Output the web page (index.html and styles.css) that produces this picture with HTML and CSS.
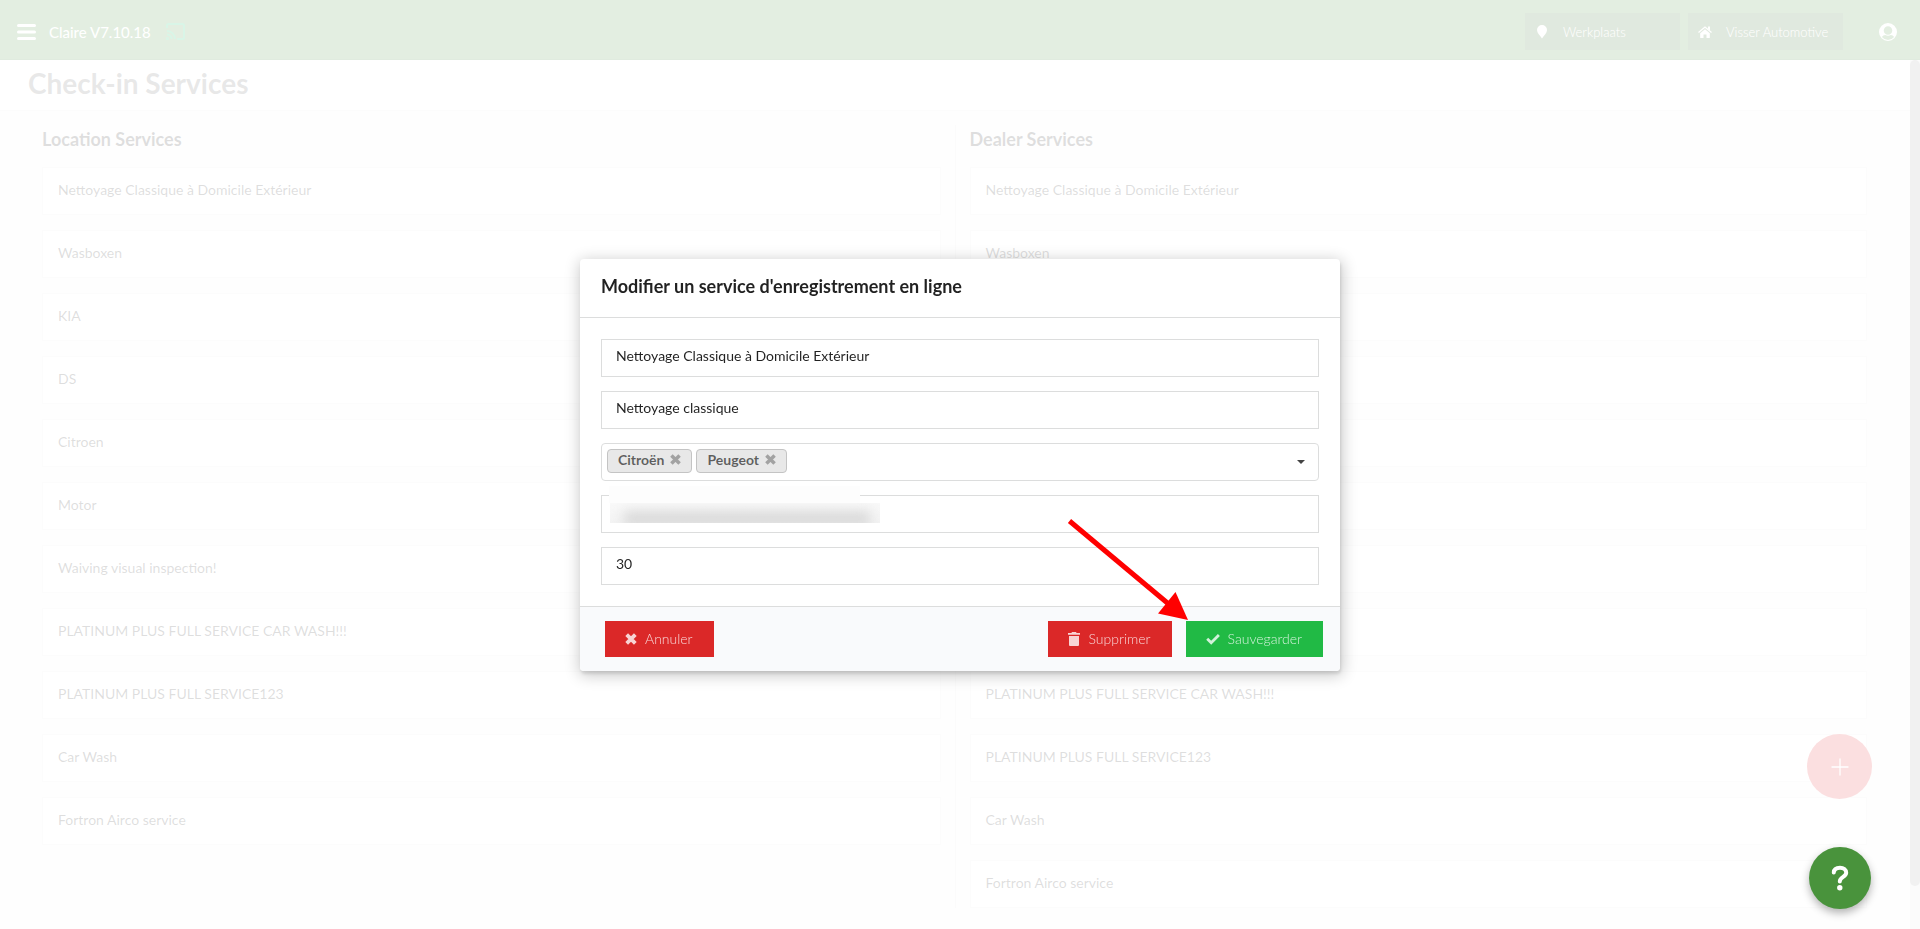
FILE: index.html
```html
<!DOCTYPE html>
<html lang="fr">
<head>
    <meta charset="UTF-8">
    <meta name="viewport" content="width=device-width, initial-scale=1.0">
    <title>Check-in Services</title>
    <link rel="stylesheet" href="styles.css">
</head>
<body>
    <header class="topbar">
        <button class="icon-button" aria-label="Menu">
            <svg width="20" height="18" viewBox="0 0 20 18"><path d="M2.500 2.500h16M2.500 9h16M2.500 15.500h16" stroke="currentColor" stroke-width="3" stroke-linecap="round"/></svg>
        </button>
        <span class="brand">Claire V7.10.18</span>
        <svg class="cast" width="19" height="17" viewBox="0 0 19 17" fill="none" stroke="currentColor" stroke-width="2"><path d="M1 5V2.500Q1 1 2.500 1h14Q18 1 18 2.500v12q0 1.500-1.500 1.500H11M1 8a8 8 0 0 1 8 8M1 11.500A4.500 4.500 0 0 1 5.500 16"/><circle cx="1.500" cy="15.500" r=".6"/></svg>
        <div class="topbar-right">
            <button class="picker">
                <span class="picker-icon"><svg width="10" height="14" viewBox="0 0 10 14" fill="currentColor"><path d="M5 0a5 5 0 0 1 5 5c0 3-3 5.500-5 8.500C3 10.500 0 8 0 5a5 5 0 0 1 5-5z"/></svg></span>
                Werkplaats
            </button>
            <button class="picker">
                <span class="picker-icon"><svg width="14" height="12" viewBox="0 0 14 12" fill="currentColor"><path d="M7 3.300l4.800 4v4.200q0 .5-.5.5H8.500V8.500h-3V12H2.700q-.5 0-.5-.5V7.300z"/><path d="M.5 6.500L7 1.100l6.500 5.400" fill="none" stroke="currentColor" stroke-width="1.300"/><path d="M10 .5h2v4l-2-1.700z"/></svg></span>
                Visser Automotive
            </button>
            <button class="icon-button account" aria-label="Compte">
                <svg width="18" height="18" viewBox="0 0 18 18"><path fill="currentColor" fill-rule="evenodd" d="M9 0a9 9 0 1 1 0 18A9 9 0 0 1 9 0zm0 3.200a4.300 4.300 0 0 0 0 8.600 4.300 4.300 0 0 0 0-8.600zM2.900 14a7.800 7.800 0 0 0 12.200 0c-.8-1.300-1.900-2-3.300-2a5.800 5.800 0 0 1-5.600 0c-1.400 0-2.500.7-3.300 2z"/></svg>
            </button>
        </div>
    </header>

    <div class="page">
        <main class="main">
            <h1 class="page-title">Check-in Services</h1>
            <div class="columns">
                <section class="column">
                    <h2>Location Services</h2>
                    <ul class="services">
                        <li>Nettoyage Classique à Domicile Extérieur</li>
                        <li>Wasboxen</li>
                        <li>KIA</li>
                        <li>DS</li>
                        <li>Citroen</li>
                        <li>Motor</li>
                        <li>Waiving visual inspection!</li>
                        <li>PLATINUM PLUS FULL SERVICE CAR WASH!!!</li>
                        <li>PLATINUM PLUS FULL SERVICE123</li>
                        <li>Car Wash</li>
                        <li>Fortron Airco service</li>
                    </ul>
                </section>
                <section class="column">
                    <h2>Dealer Services</h2>
                    <ul class="services">
                        <li>Nettoyage Classique à Domicile Extérieur</li>
                        <li>Wasboxen</li>
                        <li>KIA</li>
                        <li>DS</li>
                        <li>Citroen</li>
                        <li>Peugeot</li>
                        <li>Motor</li>
                        <li>Waiving visual inspection!</li>
                        <li>PLATINUM PLUS FULL SERVICE CAR WASH!!!</li>
                        <li>PLATINUM PLUS FULL SERVICE123</li>
                        <li>Car Wash</li>
                        <li>Fortron Airco service</li>
                    </ul>
                </section>
            </div>
        </main>
        <div class="scrollbar"><div class="scrollbar-thumb"></div></div>
    </div>

    <button class="add-button" aria-label="Ajouter">
        <svg width="18" height="18" viewBox="0 0 18 18"><path d="M9 1v16M1 9h16" stroke="currentColor" stroke-width="1.300" stroke-linecap="round"/></svg>
    </button>

    <div class="dimmer">
        <form class="modal" role="dialog" aria-labelledby="modal-title">
            <h2 class="modal-header" id="modal-title">Modifier un service d'enregistrement en ligne</h2>
            <div class="modal-content">
                <input class="field" type="text" aria-label="Nom" value="Nettoyage Classique à Domicile Extérieur">
                <input class="field" type="text" aria-label="Description" value="Nettoyage classique">
                <div class="field brands">
                    <span class="tag">Citroën
                        <button type="button" aria-label="Retirer Citroën"><svg width="11" height="11" viewBox="0 0 10 10"><path d="M1.300 1.300l7.400 7.400M8.700 1.300L1.300 8.700" stroke="currentColor" stroke-width="3.200"/></svg></button>
                    </span>
                    <span class="tag">Peugeot
                        <button type="button" aria-label="Retirer Peugeot"><svg width="11" height="11" viewBox="0 0 10 10"><path d="M1.300 1.300l7.400 7.400M8.700 1.300L1.300 8.700" stroke="currentColor" stroke-width="3.200"/></svg></button>
                    </span>
                    <select class="brand-select" aria-label="Marques"><option></option></select>
                    <svg class="caret" width="8" height="4" viewBox="0 0 8 4"><path d="M0 0h8L4 4z" fill="currentColor"/></svg>
                </div>
                <div class="masked">
                    <input class="field" type="text" aria-label="Lien">
                    <div class="mask-top"></div>
                    <div class="mask"></div>
                </div>
                <input class="field" type="text" aria-label="Durée" value="30">
            </div>
            <div class="modal-actions">
                <button type="button" class="button red">
                    <svg width="12" height="12" viewBox="0 0 10 10"><path d="M1.400 1.400l7.200 7.200M8.600 1.400L1.400 8.600" stroke="currentColor" stroke-width="3.200"/></svg>
                    Annuler
                </button>
                <button type="button" class="button red push">
                    <svg width="12" height="14" viewBox="0 0 12 14" fill="currentColor"><path d="M4 0h4l.6 1H12v1.800H0V1h3.400zM1 4h10v9q0 1-1 1H2q-1 0-1-1z"/></svg>
                    Supprimer
                </button>
                <button type="submit" class="button green">
                    <svg width="14" height="12" viewBox="0 0 14 12"><path d="M1.200 5.800l4 4L12.900 2" fill="none" stroke="currentColor" stroke-width="2.800"/></svg>
                    Sauvegarder
                </button>
            </div>
            <svg class="arrow" width="122" height="102" viewBox="0 0 122 102"><path d="M2.500 2L104 87" stroke="#f00" stroke-width="5"/><path d="M121 101l-30-6.500L108.500 73z" fill="#f00"/></svg>
        </form>
    </div>

    <button class="help-button" aria-label="Aide">
        <svg width="18" height="26" viewBox="0 0 18 26"><path d="M2.800 7.500C3 4 5.500 2.700 9 2.700S15.200 4.500 15.200 7.800C15.200 12 8.800 11.800 8.800 16.500" fill="none" stroke="currentColor" stroke-width="4" stroke-linecap="round"/><circle cx="8.800" cy="22.800" r="2.700" fill="currentColor"/></svg>
    </button>
</body>
</html>
```
FILE: styles.css
```css
* {
    box-sizing: border-box;
}
body {
    margin: 0;
    height: 100vh;
    display: flex;
    flex-direction: column;
    overflow: hidden;
    font-family: Lato, "Liberation Sans", sans-serif;
    font-size: 14px;
    line-height: 20px;
    color: rgba(0, 0, 0, 0.87);
    background: #f3f3f3;
}
button, input, select {
    font: inherit;
    color: inherit;
}
button {
    border: 0;
    padding: 0;
    background: none;
    cursor: pointer;
}
svg {
    display: block;
}
h1, h2, ul {
    margin: 0;
    padding: 0;
}

/* top bar */
.topbar {
    display: flex;
    align-items: center;
    flex: none;
    height: 60px;
    padding: 4px 23px 0 16px;
    background: #448e37;
    border-bottom: 1px solid #2f7a28;
    color: #fff;
}
.brand {
    margin: 0 15px 0 13px;
    font-size: 15px;
}
.cast {
    color: #00bc5e;
}
.topbar-right {
    display: flex;
    align-items: center;
    gap: 8px;
    margin-left: auto;
}
.picker {
    display: flex;
    align-items: center;
    width: 155px;
    height: 37px;
    background: rgba(0, 0, 0, 0.25);
    font-size: 13px;
    font-weight: 300;
}
.picker-icon {
    display: flex;
    justify-content: center;
    width: 38px;
    padding-right: 4px;
}
.account {
    margin-left: 28px;
}

/* page */
.page {
    display: flex;
    flex: 1;
    min-height: 0;
}
.main {
    flex: 1;
    overflow: hidden;
}
.page-title {
    padding: 3px 28px 7px;
    background: #fff;
    border-bottom: 1px solid #ececec;
    color: #666;
    font-size: 28px;
    line-height: 40px;
}
.columns {
    display: grid;
    grid-template-columns: 1fr 1fr;
    padding: 14px 29px 14px 28px;
}
.column {
    padding: 0 14px;
}
.column + .column {
    border-left: 1px solid #e4e4e4;
}
.column h2 {
    margin-bottom: 14px;
    font-size: 18px;
    line-height: 28px;
}
.services {
    display: flex;
    flex-direction: column;
    gap: 15px;
    list-style: none;
}
.services li {
    height: 48px;
    padding: 12px 15px;
    background: #fff;
    border: 1px solid #ebebeb;
}
.scrollbar {
    width: 10px;
    background: #e0e0e0;
}
.scrollbar-thumb {
    height: 95%;
    border-radius: 5px;
    background: #a0a0a0;
}
.add-button {
    position: absolute;
    right: 48px;
    bottom: 130px;
    display: grid;
    place-items: center;
    width: 65px;
    height: 65px;
    border-radius: 50%;
    background: #e42a30;
    color: #fff;
}

/* modal */
.dimmer {
    position: fixed;
    inset: 0;
    display: flex;
    align-items: center;
    justify-content: center;
    background: rgba(255, 255, 255, 0.85);
}
.modal {
    position: relative;
    width: 760px;
    border-radius: 4px;
    background: #fff;
    box-shadow: 1px 3px 3px rgba(0, 0, 0, 0.1), 1px 3px 15px 2px rgba(0, 0, 0, 0.2);
}
.modal-header {
    padding: 15px 21px 19px;
    border-bottom: 1px solid #dcdddd;
    font-size: 18px;
    line-height: 24px;
}
.modal-content {
    display: flex;
    flex-direction: column;
    gap: 14px;
    padding: 21px;
}
.field {
    display: block;
    width: 100%;
    height: 38px;
    padding: 6px 14px 10px;
    border: 1px solid #dcdddd;
    background: #fff;
    outline: 0;
}
.brands {
    position: relative;
    display: flex;
    align-items: flex-start;
    gap: 4px;
    padding: 5px;
    border-radius: 4px;
}
.tag {
    display: flex;
    align-items: center;
    gap: 6px;
    height: 24px;
    padding: 0 10px 2px;
    border: 1px solid #c4c4c4;
    border-radius: 4px;
    background: #e8e8e8;
    color: rgba(0, 0, 0, 0.6);
    font-weight: 700;
}
.tag button {
    opacity: 0.5;
}
.brand-select {
    flex: 1;
    height: 24px;
    border: 0;
    background: none;
    appearance: none;
}
.caret {
    position: absolute;
    right: 13px;
    top: 16px;
    color: #444;
    pointer-events: none;
}
.masked {
    position: relative;
}
/* hides the customer link */
.mask-top {
    position: absolute;
    left: 8px;
    top: -9px;
    width: 251px;
    height: 17px;
    background: #fdfdfd;
}
.mask {
    position: absolute;
    left: 9px;
    top: 8px;
    width: 270px;
    height: 20px;
    overflow: hidden;
    background: linear-gradient(#f9f9f9, #f3f3f3);
}
.mask::after {
    content: "";
    position: absolute;
    left: 14px;
    right: 10px;
    top: 8px;
    height: 16px;
    background: #dadada;
    filter: blur(6px);
}
.modal-actions {
    display: flex;
    gap: 14px;
    padding: 14px 17px 14px 25px;
    border-top: 1px solid #dcdddd;
    border-radius: 0 0 4px 4px;
    background: #f9fafc;
}
.button {
    display: flex;
    align-items: center;
    gap: 8px;
    height: 36px;
    padding: 0 21px 0 20px;
    color: rgba(255, 255, 255, 0.8);
    font-weight: 300;
}
.red {
    background: #db2828;
}
.green {
    background: #21ba45;
}
.push {
    margin-left: auto;
}
.arrow {
    position: absolute;
    right: 151px;
    bottom: 50px;
    pointer-events: none;
}

.help-button {
    position: fixed;
    right: 49px;
    bottom: 20px;
    display: grid;
    place-items: center;
    width: 62px;
    height: 62px;
    border-radius: 50%;
    background: #49933c;
    box-shadow: 0 4px 8px rgba(0, 0, 0, 0.3);
    color: #fff;
}
```
